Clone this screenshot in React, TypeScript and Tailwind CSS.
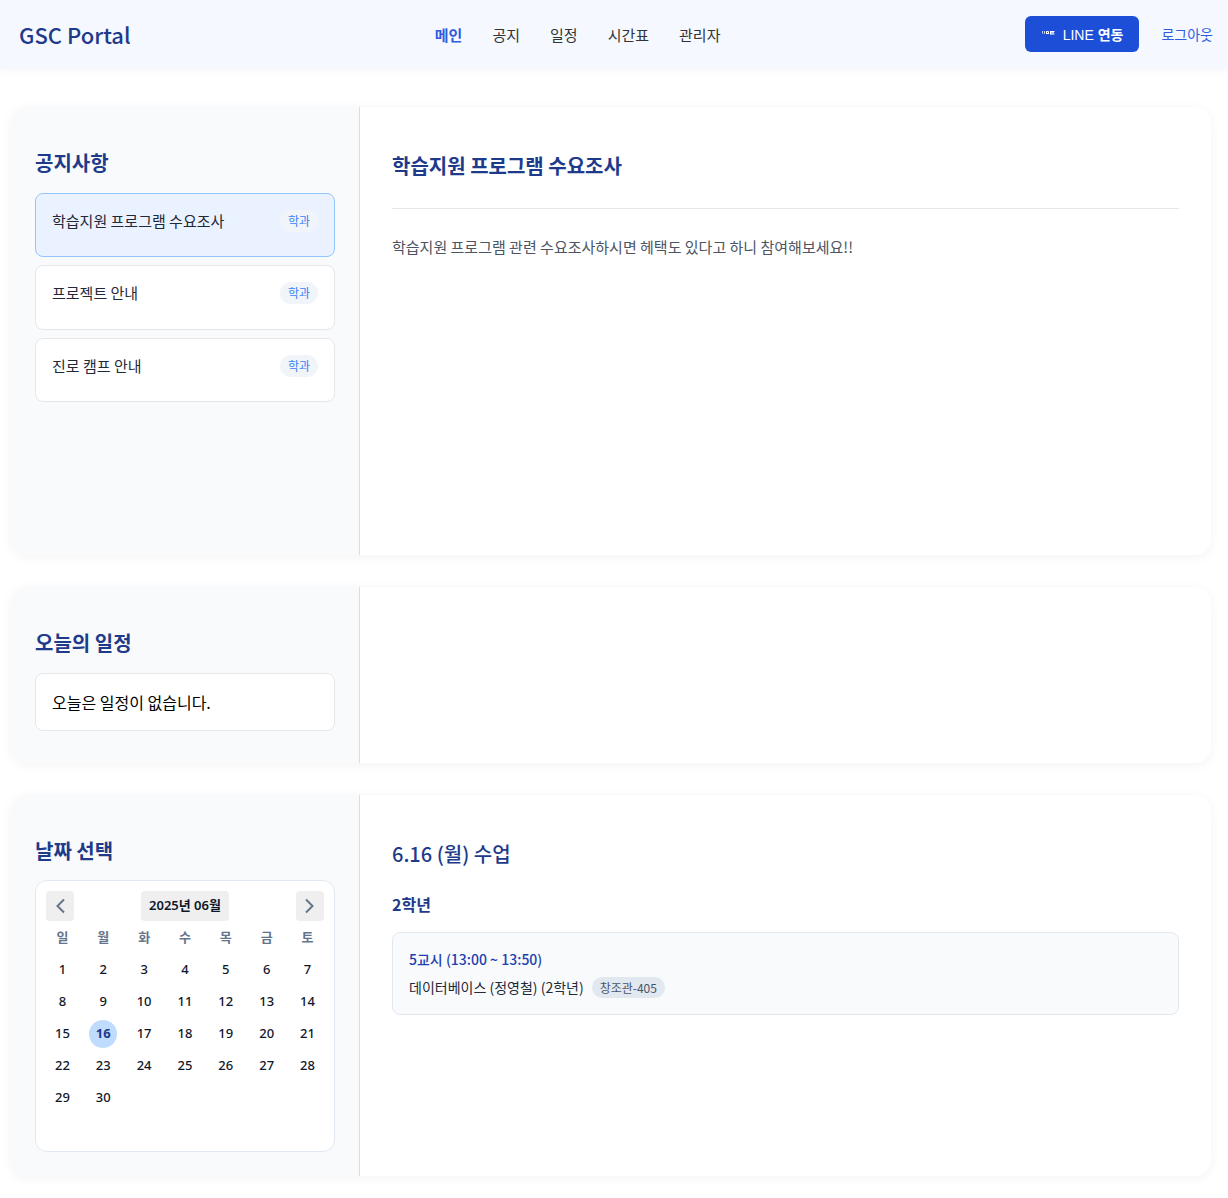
import React from "react";

const NAV = ["메인", "공지", "일정", "시간표", "관리자"];
const NOTICES = ["학습지원 프로그램 수요조사", "프로젝트 안내", "진로 캠프 안내"];
const WEEKDAYS = ["일", "월", "화", "수", "목", "금", "토"];
const WEEKS = [0, 1, 2, 3, 4].map((w) =>
  WEEKDAYS.map((_, d) => w * 7 + d + 1).map((n) => (n <= 30 ? n : null))
);

function Header() {
  return (
    <header className="flex h-[69px] items-center justify-between bg-[#f5f9ff] pr-[15px] pb-px pl-[19px] shadow-[0_2px_8px_rgba(0,0,0,0.04)]">
      <a href="#" className="text-[22px] leading-8 font-medium text-[#1e3a8a]">
        GSC Portal
      </a>
      <nav className="flex gap-[30px] pt-px text-[15px] leading-6 text-[#333]">
        {NAV.map((label, i) => (
          <a
            key={label}
            href="#"
            className={i === 0 ? "font-bold text-[#2f5be0]" : ""}
          >
            {label}
          </a>
        ))}
      </nav>
      <div className="flex items-center gap-[22px]">
        <button
          type="button"
          className="flex h-9 items-center gap-2 rounded-md bg-[#1d4ed8] px-4 text-sm text-white"
        >
          <svg width="14" height="14" viewBox="0 0 14 14" fill="none" stroke="#fff" aria-hidden="true">
            <path d="M1.5 4v2.5M3.5 4v3" strokeWidth="1" opacity="0.75" />
            <path d="M5.5 7V4.5h2V7M5.5 6.5h2" strokeWidth="1" />
            <path d="M9.5 4v3.5M9.5 4.5h4M9.5 5.8h3.5M9.5 7h4" strokeWidth="1" />
          </svg>
          <span className="font-['Liberation_Sans','Noto_Sans_CJK_KR',sans-serif]">
            LINE <span className="font-['Noto_Sans_CJK_KR',sans-serif] font-bold">연동</span>
          </span>
        </button>
        <button type="button" className="text-sm text-[#2f5be0]">
          로그아웃
        </button>
      </div>
    </header>
  );
}

function Panel({
  title,
  side,
  height,
  children,
}: {
  title: string;
  side: React.ReactNode;
  height: string;
  children?: React.ReactNode;
}) {
  return (
    <section
      className={`flex overflow-hidden rounded-2xl bg-white shadow-[0_2px_12px_rgba(0,0,0,0.05)] ${height}`}
    >
      <div className="w-[349px] shrink-0 border-r border-[#ddd] bg-[#f9fafc] px-6 pt-10 pb-6">
        <h2 className="mb-[14px] text-xl leading-8 font-bold text-[#1e3a8a]">{title}</h2>
        {side}
      </div>
      <div className="min-w-0 flex-1 px-8 pt-11">{children}</div>
    </section>
  );
}

function NoticeList() {
  return (
    <ul className="flex flex-col gap-2">
      {NOTICES.map((label, i) => (
        <li key={label}>
          <button
            type="button"
            className={`flex w-full items-start justify-between rounded-lg border px-4 pt-4 text-left ${
              i === 1 ? "h-[65px]" : "h-16"
            } ${i === 0 ? "border-[#93c5fd] bg-[#ebf2ff]" : "border-[#e5e7eb] bg-white"}`}
          >
            <span className="text-[15px] leading-[22px] text-[#1f2937]">{label}</span>
            <span className="rounded-full bg-[#f1f5f9] px-2 text-xs leading-[22px] text-[#3b82f6]">
              학과
            </span>
          </button>
        </li>
      ))}
    </ul>
  );
}

function Chevron({ d }: { d: string }) {
  return (
    <svg width="16" height="16" viewBox="0 0 16 16" fill="none" stroke="#64748b" strokeWidth="2" aria-hidden="true">
      <path d={d} />
    </svg>
  );
}

function Calendar() {
  return (
    <div className="-mt-px h-[272px] rounded-xl border border-[#e2e8f0] bg-white p-[10px] font-['Noto_Sans','Noto_Sans_CJK_KR',sans-serif]">
      <div className="flex items-center justify-between">
        <button type="button" aria-label="이전 달" className="flex h-[30px] w-7 items-center justify-center rounded bg-[#efefef]">
          <Chevron d="M12 1.5L5.5 8l6.5 6.5" />
        </button>
        <button type="button" className="h-[30px] rounded bg-[#efefef] px-2 text-[13px] font-semibold text-[#0f172a]">
          2025년 06월
        </button>
        <button type="button" aria-label="다음 달" className="flex h-[30px] w-7 items-center justify-center rounded bg-[#efefef]">
          <Chevron d="M4 1.5L10.500 8L4 14.500" />
        </button>
      </div>
      <table className="-mx-1 mt-px w-[286px] table-fixed border-collapse text-center text-[13px] text-[#0f172a]">
        <thead>
          <tr className="h-8 text-[#64748b]">
            {WEEKDAYS.map((d) => (
              <th key={d} scope="col" className="p-0 font-bold">
                {d}
              </th>
            ))}
          </tr>
        </thead>
        <tbody>
          {WEEKS.map((week, w) => (
            <tr key={w} className="h-8">
              {week.map((n, d) => (
                <td key={d} className="p-0 align-middle">
                  {n && (
                    <button
                      type="button"
                      className={`mx-auto block size-7 rounded-full ${
                        n === 16 ? "bg-[#bfdbfe] font-bold text-[#1e3a8a]" : "font-medium"
                      }`}
                    >
                      {n}
                    </button>
                  )}
                </td>
              ))}
            </tr>
          ))}
        </tbody>
      </table>
    </div>
  );
}

export default function App() {
  return (
    <div className="min-h-screen bg-white font-['Noto_Sans_CJK_KR',sans-serif]">
      <Header />
      <main className="flex flex-col gap-8 pt-[38px] pr-[17px] pb-[22px] pl-[11px]">
        <Panel title="공지사항" height="min-h-[448px]" side={<NoticeList />}>
          <h1 className="border-b border-[#e5e7eb] pb-[27px] text-xl leading-[30px] font-bold text-[#1e3a8a]">
            학습지원 프로그램 수요조사
          </h1>
          <p className="pt-6 text-[15px] leading-7 text-[#4b5563]">
            학습지원 프로그램 관련 수요조사하시면 헤택도 있다고 하니 참여해보세요!!
          </p>
        </Panel>
        <Panel
          title="오늘의 일정"
          height="min-h-[176px]"
          side={
            <div className="rounded-lg border border-[#e5e7eb] bg-white p-4 text-base leading-6 text-black">
              오늘은 일정이 없습니다.
            </div>
          }
        />
        <Panel title="날짜 선택" height="min-h-[381px]" side={<Calendar />}>
          <h2 className="text-xl leading-[30px] font-medium text-[#1e3a8a]">6.16 (월) 수업</h2>
          <h3 className="mt-6 text-base leading-[22px] font-bold text-[#1e3a8a]">2학년</h3>
          <div className="mt-[17px] rounded-lg border border-[#e2e8f0] bg-[#f8fafc] px-4 pt-[15px] pb-[15px]">
            <p className="text-sm leading-[22px] font-medium text-[#1e40af]">5교시 (13:00 ~ 13:50)</p>
            <p className="mt-[5px] flex items-center gap-2 text-sm leading-6 text-[#1f2937]">
              데이터베이스 (정영철) (2학년)
              <span className="rounded-full bg-[#e2e8f0] px-2 text-xs leading-[21px] text-[#475569]">
                창조관-405
              </span>
            </p>
          </div>
        </Panel>
      </main>
    </div>
  );
}
